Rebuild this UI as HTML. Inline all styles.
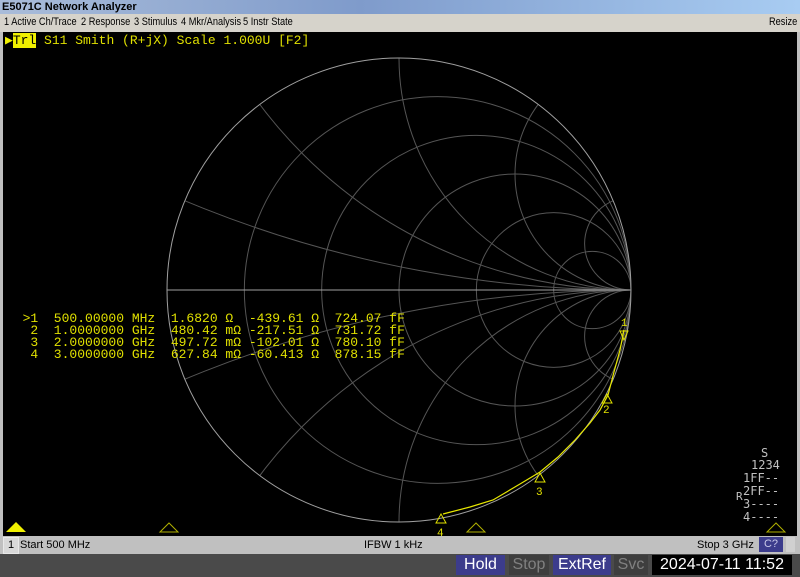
<!DOCTYPE html>
<html><head><meta charset="utf-8"><style>
html,body{margin:0;width:800px;height:577px;overflow:hidden}
body{background:#000;font-family:"Liberation Sans",sans-serif;position:relative}
div,pre{position:absolute;margin:0}
.mono{font-family:"Liberation Mono","DejaVu Sans Mono",monospace}
.m{position:absolute;top:0;transform:scaleX(0.84);transform-origin:left;white-space:nowrap}
</style></head><body>
<div style="left:0;top:0;width:798px;height:14px;background:linear-gradient(to right,#a9bcd9,#7f9bcb 45%,#a8ccf2);font-size:11px;font-weight:bold;line-height:14px;padding-left:2px;color:#000;white-space:nowrap">E5071C Network Analyzer</div>
<div style="left:0;top:14px;width:800px;height:18px;background:#d6d3cb;font-size:11px;line-height:16px;color:#000;overflow:hidden"><span class="m" style="left:4px">1 Active Ch/Trace</span><span class="m" style="left:81px">2 Response</span><span class="m" style="left:134px">3 Stimulus</span><span class="m" style="left:181px">4 Mkr/Analysis</span><span class="m" style="left:243px">5 Instr State</span><span class="m" style="left:769px">Resize</span></div>
<div style="left:0;top:32px;width:3px;height:504px;background:#c0c0c0"></div>
<div style="left:797px;top:32px;width:3px;height:504px;background:#c0c0c0"></div>
<svg style="position:absolute;left:0;top:0" width="800" height="577">
<defs><clipPath id="c"><circle cx="399" cy="290" r="232"/></clipPath></defs>
<g fill="none" stroke="#555" stroke-width="1" clip-path="url(#c)">
<circle cx="437.67" cy="290" r="193.33"/><circle cx="476.33" cy="290" r="154.67"/><circle cx="515" cy="290" r="116"/><circle cx="553.67" cy="290" r="77.33"/><circle cx="592.33" cy="290" r="38.67"/>
<circle cx="631" cy="-870" r="1160"/><circle cx="631" cy="1450" r="1160"/>
<circle cx="631" cy="-174" r="464"/><circle cx="631" cy="754" r="464"/>
<circle cx="631" cy="58" r="232"/><circle cx="631" cy="522" r="232"/>
<circle cx="631" cy="174" r="116"/><circle cx="631" cy="406" r="116"/>
<circle cx="631" cy="243.6" r="46.4"/><circle cx="631" cy="336.4" r="46.4"/>
</g>
<circle cx="399" cy="290" r="232" fill="none" stroke="#a0a0a0"/>
<line x1="167" y1="290" x2="631" y2="290" stroke="#a0a0a0"/>
<polyline fill="none" stroke="#e8e800" stroke-width="1.2" points="624,330 620,350 614,372 608,395 600,410 590,423 575,440 558,457 540,472 520,484 493,500 470,507 443,514"/>
<g fill="none" stroke="#e0e000" stroke-width="1">
<polygon points="620,331 628,331 624,340"/>
<polygon points="607,394 602,403 612,403"/>
<polygon points="540,473 535,482 545,482"/>
<polygon points="441,514 436,523 446,523"/>
<polygon points="160,532 169,523 178,532" stroke="#b0b000"/>
<polygon points="467,532 476,523 485,532" stroke="#b0b000"/>
<polygon points="767,532 776,523 785,532" stroke="#b0b000"/>
</g>
<polygon points="6,532 16,522 26,532" fill="#f0f000"/>
<g fill="#e0e000" font-family="Liberation Mono,monospace" font-size="11"><text x="621" y="326">1</text><text x="603" y="413">2</text><text x="536" y="495">3</text><text x="437" y="536">4</text></g>
<g fill="#c0c0c0" font-family="DejaVu Sans Mono,monospace" font-size="12"><text x="761" y="457">S</text><text x="751" y="469">1234</text><text x="743" y="482">1FF--</text><text x="743" y="495">2FF--</text><text x="736" y="500" font-size="11">R</text><text x="743" y="508">3----</text><text x="743" y="521">4----</text></g>
</svg>
<div class="mono" style="left:5px;top:33px;font-size:13px;line-height:15px;color:#e0e000;white-space:pre"><span style="color:#f0f000">&#9654;</span><span style="background:#f0f000;color:#000">Trl</span> S11 Smith (R+jX) Scale 1.000U [F2]</div>
<pre class="mono" style="left:7px;top:313px;font-size:13px;line-height:12px;color:#e0e000">  >1  500.00000 MHz  1.6820 Ω  -439.61 Ω  724.07 fF
   2  1.0000000 GHz  480.42 mΩ -217.51 Ω  731.72 fF
   3  2.0000000 GHz  497.72 mΩ -102.01 Ω  780.10 fF
   4  3.0000000 GHz  627.84 mΩ -60.413 Ω  878.15 fF</pre>
<div style="left:0;top:536px;width:800px;height:18px;background:#c0c0c0;font-size:11px;line-height:18px;color:#000;overflow:hidden">
<span style="position:absolute;left:3px;top:1px;width:14px;height:15px;line-height:15px;text-align:center;background:#d8d8d8;border:1px solid #e8e8e8">1</span>
<span style="position:absolute;left:20px">Start 500 MHz</span>
<span style="position:absolute;left:364px">IFBW 1 kHz</span>
<span style="position:absolute;left:697px">Stop 3 GHz</span>
<span style="position:absolute;left:759px;top:1px;width:24px;height:15px;line-height:15px;text-align:center;background:#3c3c8c;color:#c8c8e8">C?</span>
<span style="position:absolute;left:786px;top:1px;width:9px;height:15px;background:#d0d0d0"></span>
</div>
<div style="left:0;top:554px;width:800px;height:23px;background:#4a4a4a;font-size:16px;line-height:20px;overflow:hidden">
<span style="position:absolute;left:456px;top:1px;width:49px;height:20px;text-align:center;background:#3c3c8c;color:#fff">Hold</span>
<span style="position:absolute;left:509px;top:1px;width:40px;height:20px;text-align:center;background:#3e3e3e;color:#808080">Stop</span>
<span style="position:absolute;left:553px;top:1px;width:58px;height:20px;text-align:center;background:#3c3c8c;color:#fff">ExtRef</span>
<span style="position:absolute;left:614px;top:1px;width:34px;height:20px;text-align:center;background:#3e3e3e;color:#808080">Svc</span>
<span style="position:absolute;left:652px;top:1px;width:140px;height:20px;text-align:center;background:#000;color:#fff">2024-07-11 11:52</span>
</div>
</body></html>
